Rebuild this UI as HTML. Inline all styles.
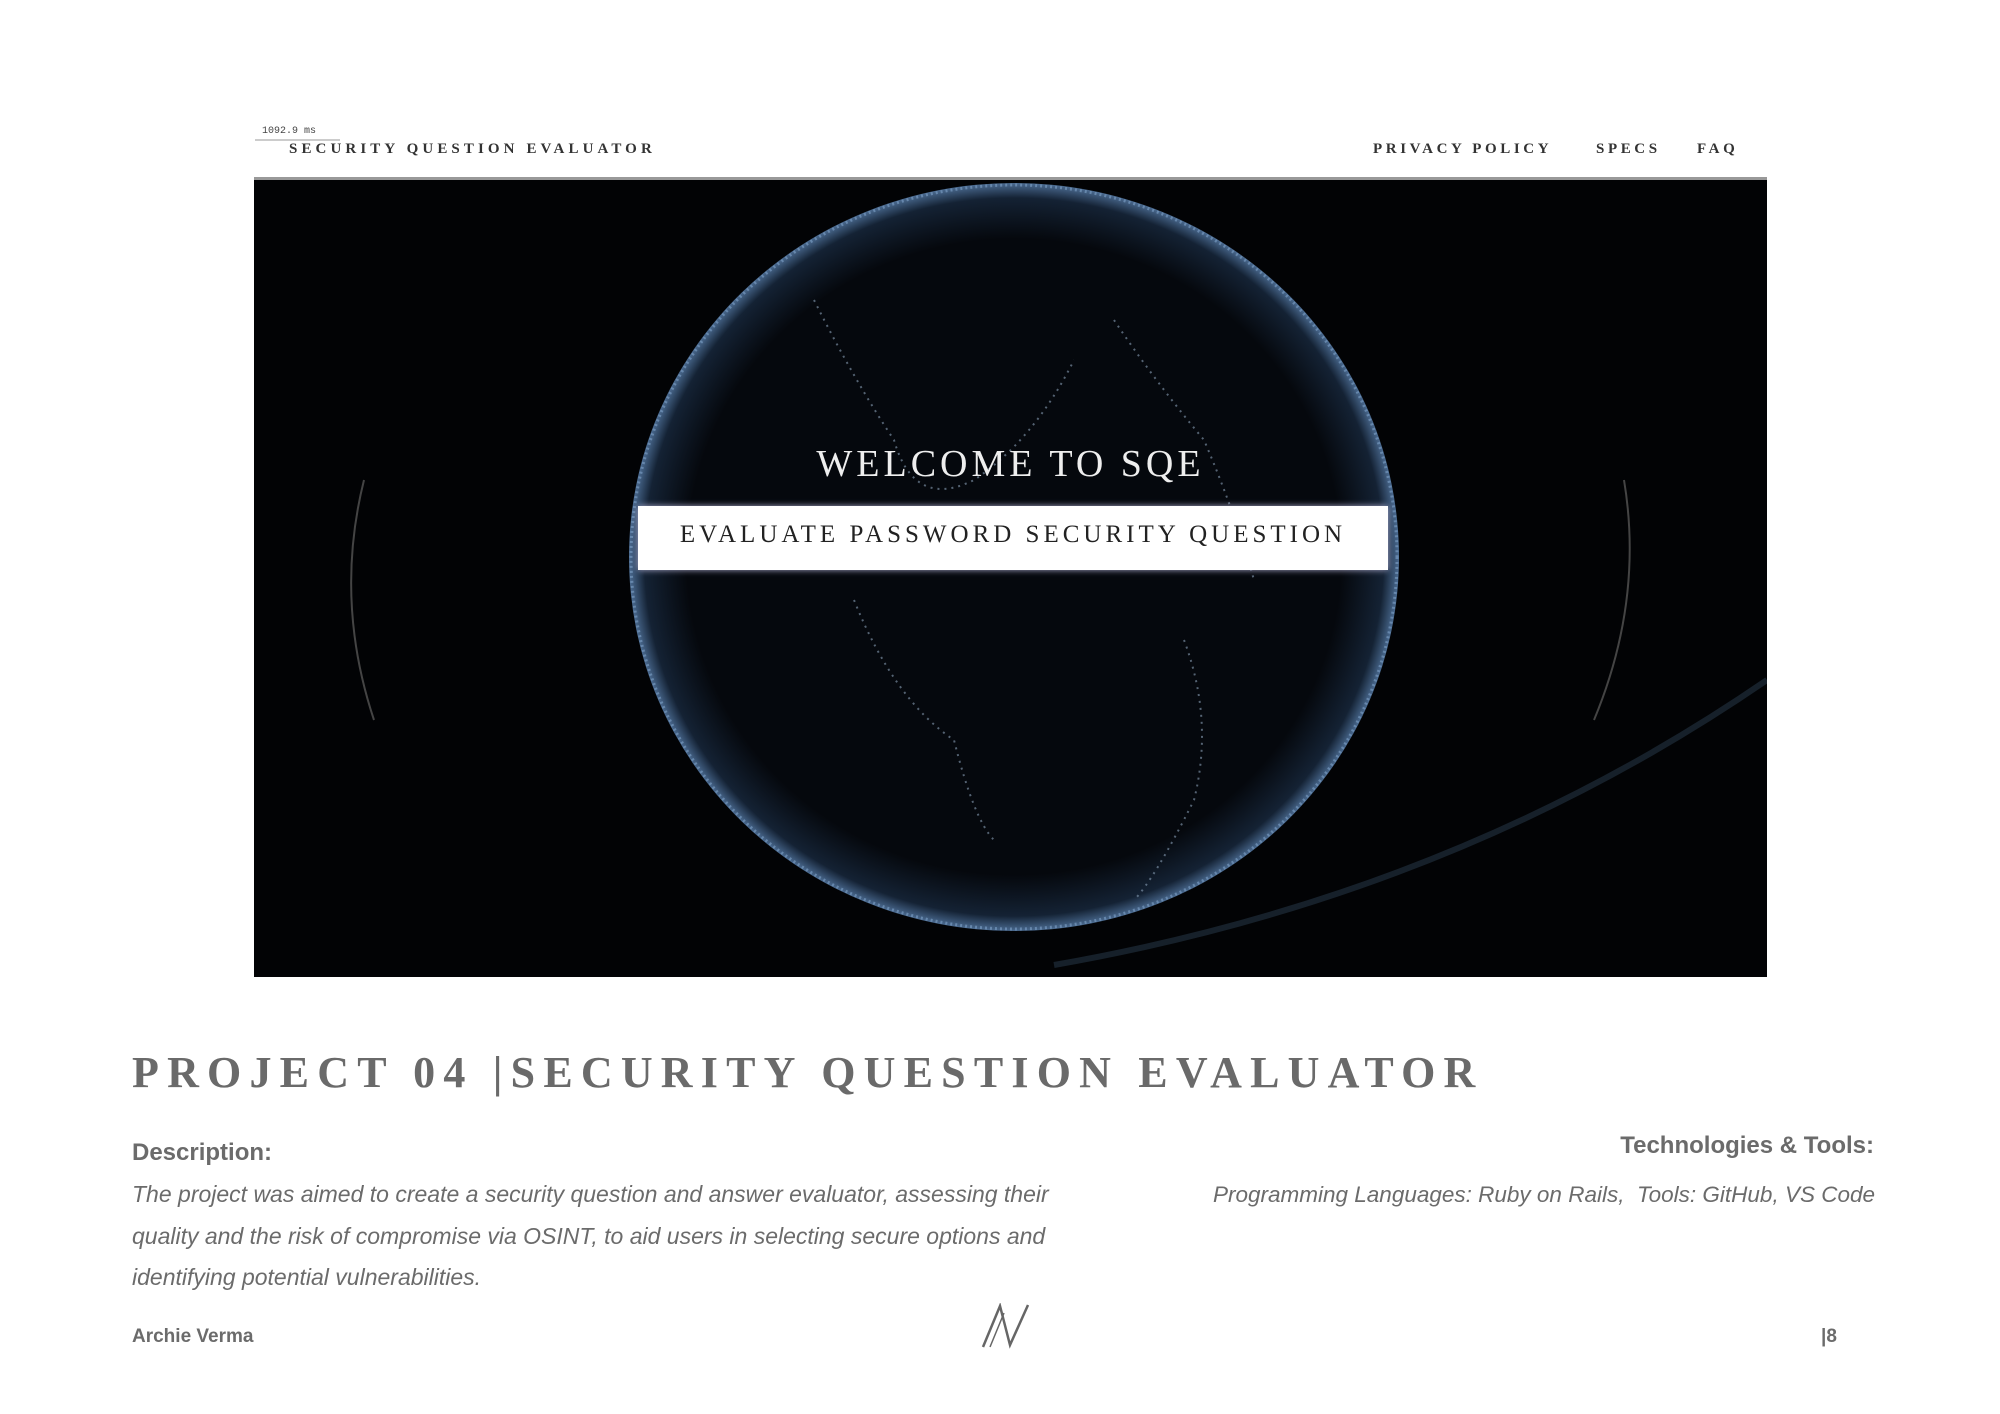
<!DOCTYPE html>
<html><head><meta charset="utf-8"><style>
body{margin:0;width:2000px;height:1414px;background:#fff;position:relative;overflow:hidden;font-family:"Liberation Sans",sans-serif}
.a{position:absolute;white-space:nowrap}
.serif{font-family:"Liberation Serif",serif}
</style></head><body>
<div class="a" style="left:262px;top:126px;font-family:'Liberation Mono',monospace;font-size:10px;color:#444">1092.9 ms</div>
<div class="a" style="left:255px;top:139px;width:85px;height:2px;background:#ccc"></div>
<div class="a serif" style="left:289px;top:141px;font-size:15px;letter-spacing:4.1px;color:#333;font-weight:bold">SECURITY QUESTION EVALUATOR</div>
<div class="a serif" style="left:1373px;top:141px;font-size:15px;letter-spacing:3.6px;color:#333;font-weight:bold">PRIVACY POLICY</div>
<div class="a serif" style="left:1596px;top:141px;font-size:15px;letter-spacing:3.6px;color:#333;font-weight:bold">SPECS</div>
<div class="a serif" style="left:1697px;top:141px;font-size:15px;letter-spacing:3.6px;color:#333;font-weight:bold">FAQ</div>
<div class="a" style="left:254px;top:177px;width:1513px;height:3px;background:#999"></div>
<div class="a" style="left:254px;top:180px;width:1513px;height:797px;background:#020305;overflow:hidden">
<svg width="1513" height="797" style="position:absolute;left:0;top:0">
<defs><radialGradient id="g" cx="50%" cy="50%" r="50%"><stop offset="0.85" stop-color="#05080d"/><stop offset="0.96" stop-color="#142234"/><stop offset="1" stop-color="#4a6a90"/></radialGradient></defs>
<ellipse cx="760" cy="377" rx="385" ry="374" fill="url(#g)"/>
<ellipse cx="760" cy="377" rx="383" ry="372" fill="none" stroke="#7ea2c8" stroke-width="3" stroke-dasharray="2 3" opacity="0.6"/>
<path d="M560 120 Q600 200 640 260 Q660 330 720 300 Q780 260 820 180 M860 140 Q900 200 950 260 Q980 330 1000 400 M600 420 Q640 520 700 560 Q720 640 740 660 M930 460 Q960 540 940 620 Q900 700 880 720" fill="none" stroke="#8aa0b8" stroke-width="2" stroke-dasharray="2 5" opacity="0.6"/>
<path d="M110 300 Q80 420 120 540 M1370 300 Q1390 420 1340 540" fill="none" stroke="#444" stroke-width="2"/>
<path d="M800 785 Q1200 715 1513 500" fill="none" stroke="#16202a" stroke-width="6"/>
</svg>
<div class="a serif" style="left:0;width:1513px;text-align:center;top:262px;font-size:38px;letter-spacing:4px;color:#eee">WELCOME TO SQE</div>
<div class="a" style="left:384px;top:326px;width:750px;height:64px;background:#fff;box-shadow:0 0 6px #aac"></div>
<div class="a serif" style="left:384px;width:750px;text-align:center;top:341px;font-size:25px;letter-spacing:4px;color:#222">EVALUATE PASSWORD SECURITY QUESTION</div>
</div>
<div class="a serif" style="left:132px;top:1047px;font-size:44px;font-weight:bold;letter-spacing:8.2px;color:#6a6a6a">PROJECT 04 |SECURITY QUESTION EVALUATOR</div>
<div class="a" style="left:132px;top:1139px;font-size:24px;font-weight:bold;color:#6b6b6b">Description:</div>
<div class="a" style="right:126px;top:1132px;font-size:24px;font-weight:bold;color:#6b6b6b">Technologies &amp; Tools:</div>
<div class="a" style="left:132px;top:1174px;font-size:23px;font-style:italic;color:#6b6b6b;line-height:41.5px">The project was aimed to create a security question and answer evaluator, assessing their<br>quality and the risk of compromise via OSINT, to aid users in selecting secure options and<br>identifying potential vulnerabilities.</div>
<div class="a" style="right:125px;top:1174px;font-size:22.5px;font-style:italic;color:#6b6b6b;line-height:41.5px">Programming Languages: Ruby on Rails,&nbsp; Tools: GitHub, VS Code</div>
<div class="a" style="left:132px;top:1326px;font-size:19px;font-weight:bold;color:#6b6b6b">Archie Verma</div>
<div class="a" style="left:1821px;top:1326px;font-size:19px;font-weight:bold;color:#6b6b6b">|8</div>
<svg class="a" style="left:980px;top:1303px" width="52" height="46"><path d="M3 44 L20 3 L30 42 L48 2" fill="none" stroke="#666" stroke-width="2.5"/><path d="M10 44 L24 10" fill="none" stroke="#666" stroke-width="1.5"/></svg>
</body></html>
